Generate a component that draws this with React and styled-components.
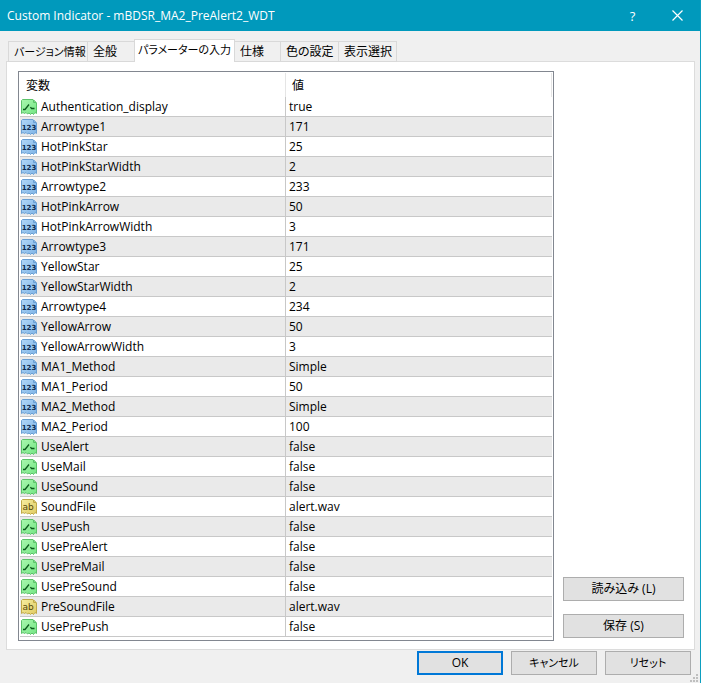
import React, { useState } from 'react'
import styled, { createGlobalStyle, css } from 'styled-components'

const tabs = [
  { label: 'バージョン情報', width: 79, kana: true },
  { label: '全般', width: 47 },
  { label: 'パラメーターの入力', width: 101, kana: true },
  { label: '仕様', width: 45 },
  { label: '色の設定', width: 58 },
  { label: '表示選択', width: 59 },
]

const params = [
  ['bool', 'Authentication_display', 'true'],
  ['int', 'Arrowtype1', '171'],
  ['int', 'HotPinkStar', '25'],
  ['int', 'HotPinkStarWidth', '2'],
  ['int', 'Arrowtype2', '233'],
  ['int', 'HotPinkArrow', '50'],
  ['int', 'HotPinkArrowWidth', '3'],
  ['int', 'Arrowtype3', '171'],
  ['int', 'YellowStar', '25'],
  ['int', 'YellowStarWidth', '2'],
  ['int', 'Arrowtype4', '234'],
  ['int', 'YellowArrow', '50'],
  ['int', 'YellowArrowWidth', '3'],
  ['int', 'MA1_Method', 'Simple'],
  ['int', 'MA1_Period', '50'],
  ['int', 'MA2_Method', 'Simple'],
  ['int', 'MA2_Period', '100'],
  ['bool', 'UseAlert', 'false'],
  ['bool', 'UseMail', 'false'],
  ['bool', 'UseSound', 'false'],
  ['string', 'SoundFile', 'alert.wav'],
  ['bool', 'UsePush', 'false'],
  ['bool', 'UsePreAlert', 'false'],
  ['bool', 'UsePreMail', 'false'],
  ['bool', 'UsePreSound', 'false'],
  ['string', 'PreSoundFile', 'alert.wav'],
  ['bool', 'UsePrePush', 'false'],
]

const iconColors = {
  bool: { light: '#a9f7ae', dark: '#74e584', edge: '#5cc26a', ink: '#0b5a1c' },
  int: { light: '#b0d6f7', dark: '#7fb4e6', edge: '#6a9fd3', ink: '#0e2c50' },
  string: { light: '#f6eda0', dark: '#e0cb62', edge: '#c0aa48', ink: '#54480c' },
}

const TypeIcon = ({ type }) => {
  const { light, dark, edge, ink } = iconColors[type]
  return (
    <Glyph viewBox="0 0 16 16" aria-hidden="true">
      <defs>
        <linearGradient id={`fill-${type}`} x1="0" y1="0" x2="1" y2="1">
          <stop offset="0" stopColor={light} />
          <stop offset="1" stopColor={dark} />
        </linearGradient>
      </defs>
      <path
        d="M.5 1.5L1.5.5H12L15.5 4V14.5L14 13.5L12.5 15.5L11 14L9.5 15.5L8 14L6.5 15L5 13.5L3.5 14.5L2 13.5L.5 14.5Z"
        fill={`url(#fill-${type})`}
        stroke={edge}
      />
      <path d="M12.5 1V3.5H15Z" fill={light} stroke={edge} />
      {type === 'bool' && (
        <path d="M2 10.5H4L8 5.5M9.5 8L10.5 9.5H13.5" fill="none" stroke={ink} strokeWidth="1.3" />
      )}
      {type === 'int' && (
        <GlyphText x="8" y="11" fill={ink} $size={7}>123</GlyphText>
      )}
      {type === 'string' && (
        <GlyphText x="7" y="11" fill={ink} $size={9} $regular>ab</GlyphText>
      )}
    </Glyph>
  )
}

const App = () => {
  const [active, setActive] = useState(2)

  return (
    <Dialog>
      <GlobalStyle />
      <TitleBar>
        <Title>Custom Indicator - mBDSR_MA2_PreAlert2_WDT</Title>
        <TitleButton aria-label="Help">?</TitleButton>
        <TitleButton aria-label="Close">
          <svg width="11" height="11" viewBox="0 0 11 11">
            <path d="M.5.5L10.5 10.5M10.5.5L.5 10.5" stroke="#fff" strokeWidth="1.2" fill="none" />
          </svg>
        </TitleButton>
      </TitleBar>
      <Body>
        <TabList role="tablist">
          {tabs.map(({ label, width, kana }, i) => (
            <Tab
              key={label}
              role="tab"
              aria-selected={i === active}
              $active={i === active}
              $width={width}
              $kana={kana}
              onClick={() => setActive(i)}
            >
              {label}
            </Tab>
          ))}
        </TabList>
        <Pane role="tabpanel">
          <ListBox>
            <Table>
              <thead>
                <tr>
                  <HeadCell>変数</HeadCell>
                  <HeadCell>値</HeadCell>
                </tr>
              </thead>
              <tbody>
                {params.map(([type, name, value]) => (
                  <Row key={name}>
                    <Cell>
                      <NameBox>
                        <TypeIcon type={type} />
                        {name}
                      </NameBox>
                    </Cell>
                    <Cell>{value}</Cell>
                  </Row>
                ))}
              </tbody>
            </Table>
          </ListBox>
          <SideButtons>
            <Button>読み込み (L)</Button>
            <Button>保存 (S)</Button>
          </SideButtons>
        </Pane>
        <Footer>
          <FooterButton $primary>OK</FooterButton>
          <FooterButton $kana>キャンセル</FooterButton>
          <FooterButton $kana>リセット</FooterButton>
        </Footer>
      </Body>
      <Grip viewBox="0 0 8 8" aria-hidden="true">
        <path d="M6 0h2v2h-2zM3 3h2v2h-2zM6 3h2v2h-2zM0 6h2v2h-2zM3 6h2v2h-2zM6 6h2v2h-2z" fill="#bfbfbf" />
      </Grip>
    </Dialog>
  )
}

export default App

const GlobalStyle = createGlobalStyle`
  * {
    box-sizing: border-box;
  }

  body {
    margin: 0;
    background: #f0f0f0;
  }

  body, button {
    font-family: 'Open Sans', 'Noto Sans CJK JP', sans-serif;
    font-size: 12px;
    line-height: 16px;
    font-feature-settings: 'palt';
    color: #000;
  }
`

const Dialog = styled.main`
  position: relative;
  display: flex;
  flex-direction: column;
  min-height: 100vh;
  background: #f0f0f0;
  border-right: 1px solid #0c9fc0;
`

const TitleBar = styled.header`
  display: flex;
  align-items: center;
  height: 31px;
  padding-left: 7px;
  background: #0099bc;
  color: #fff;
`

const Title = styled.h1`
  flex: 1;
  margin: 0;
  font-size: 12px;
  font-weight: 400;
`

const TitleButton = styled.button`
  display: flex;
  align-items: center;
  justify-content: center;
  width: 45px;
  height: 30px;
  padding: 0;
  border: 0;
  background: none;
  color: #fff;
  font-size: 13px;
`

const Body = styled.div`
  flex: 1;
  padding: 8px 5px 8px 6px;
`

const TabList = styled.div`
  display: flex;
  align-items: flex-end;
  height: 23px;
  padding-left: 2px;
  margin-bottom: -1px;
`

/* katakana labels are set one size down so they stay inside their tab */
const Tab = styled.button`
  width: ${({ $width }) => $width}px;
  height: 21px;
  padding: 0 0 0 5px;
  border: 1px solid #d9d9d9;
  border-right: 0;
  background: #f0f0f0;
  font-size: ${({ $kana }) => ($kana ? 11 : 12)}px;
  text-align: left;
  white-space: nowrap;

  &:last-child {
    border-right: 1px solid #d9d9d9;
  }

  ${({ $active }) =>
    $active &&
    css`
      z-index: 1;
      height: 23px;
      padding: 0 0 2px;
      border-right: 1px solid #d9d9d9;
      border-bottom: 0;
      background: #fff;
      text-align: center;

      & + button {
        border-left: 0;
      }
    `}
`

const Pane = styled.section`
  display: flex;
  gap: 9px;
  padding: 9px 10px 8px 11px;
  border: 1px solid #dcdcdc;
  background: #fff;
`

const ListBox = styled.div`
  flex: 1;
  padding: 1px 1px 3px;
  border: 1px solid #828790;
  background: #fff;
`

const Table = styled.table`
  width: 100%;
  table-layout: fixed;
  border-collapse: separate;
  border-spacing: 0;
`

const HeadCell = styled.th`
  height: 24px;
  padding: 1px 6px 0;
  border-right: 1px solid #e5e5e5;
  font-weight: 400;
  text-align: left;
`

const Row = styled.tr`
  &:nth-child(even) {
    background: #eaeaea;
  }
`

const Cell = styled.td`
  height: 20px;
  padding: 2px 3px 0;
  border-bottom: 1px solid #c8c8c8;
  vertical-align: top;

  &:first-child {
    padding: 2px 1px 0;
    border-right: 1px solid #c8c8c8;
  }
`

const NameBox = styled.div`
  display: flex;
  align-items: center;
  gap: 4px;
`

const Glyph = styled.svg`
  flex: none;
  width: 16px;
  height: 16px;
`

const GlyphText = styled.text`
  font-family: 'DejaVu Sans', sans-serif;
  font-size: ${({ $size }) => $size}px;
  font-weight: ${({ $regular }) => ($regular ? 400 : 700)};
  text-anchor: middle;
`

const SideButtons = styled.div`
  display: flex;
  flex-direction: column;
  justify-content: flex-end;
  gap: 13px;
  width: 121px;
  padding-bottom: 3px;
`

const Button = styled.button`
  height: 24px;
  padding: 0;
  border: ${({ $primary }) => ($primary ? '2px solid #0078d7' : '1px solid #adadad')};
  background: #e1e1e1;
  font-size: ${({ $kana }) => ($kana ? 11 : 12)}px;
`

const Footer = styled.footer`
  display: flex;
  justify-content: flex-end;
  gap: 8px;
  padding: 1px 4px 0 0;
`

const FooterButton = styled(Button)`
  width: 86px;
`

const Grip = styled.svg`
  position: absolute;
  right: 2px;
  bottom: 1px;
  width: 8px;
  height: 8px;
`
